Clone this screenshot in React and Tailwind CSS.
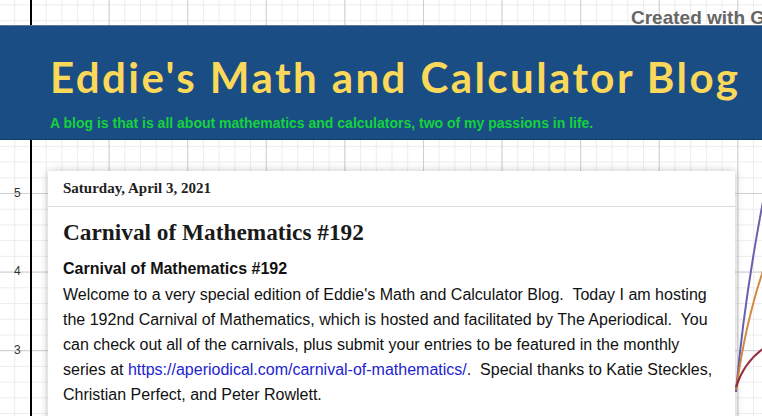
import React from "react";

export default function App() {
  return (
    <div className="relative w-[762px] h-[416px] overflow-hidden bg-white [background-image:linear-gradient(to_right,#cfcfcf_1px,transparent_1px),linear-gradient(to_bottom,#cfcfcf_1px,transparent_1px),linear-gradient(to_right,#ececec_1px,transparent_1px),linear-gradient(to_bottom,#ececec_1px,transparent_1px)] [background-size:78.6px_78.6px,78.6px_78.6px,15.72px_15.72px,15.72px_15.72px] [background-position:30px_35.8px,30px_35.8px,14.28px_4.36px,14.28px_4.36px]">
      {/* graph canvas items */}
      <div className="absolute left-[30px] top-0 bottom-0 w-[1.5px] bg-black" />
      <div className="absolute left-[14px] top-[185px] text-[12px] leading-[16px] text-[#333] [font-family:'Liberation_Sans',Arial,sans-serif]">5</div>
      <div className="absolute left-[14px] top-[263px] text-[12px] leading-[16px] text-[#333] [font-family:'Liberation_Sans',Arial,sans-serif]">4</div>
      <div className="absolute left-[14px] top-[342px] text-[12px] leading-[16px] text-[#333] [font-family:'Liberation_Sans',Arial,sans-serif]">3</div>
      <svg className="absolute left-[730px] top-[180px]" width="40" height="236" viewBox="730 180 40 236">
        <path d="M736 392 Q744 300 764 196" fill="none" stroke="#6a5fb0" strokeWidth="2" />
        <path d="M736 390 Q746 320 764 268" fill="none" stroke="#d28a3e" strokeWidth="2" />
        <path d="M736 387 Q744 362 764 348" fill="none" stroke="#9a2f45" strokeWidth="2" />
      </svg>

      <div className="relative z-10 flex flex-col">
        <div className="h-[25px] overflow-hidden whitespace-nowrap pl-[631px] pt-[6px] text-[19px] leading-[24px] font-bold text-[#666] [font-family:'Liberation_Sans',Arial,sans-serif]">
          Created with Graphing Calculator
        </div>
        <header className="h-[115px] bg-[#1b4d85] border-t border-[#5e7896] border-b border-b-[#15406e] flex flex-col pl-[50px]">
          <h1 className="mt-[27px] text-[42px] leading-[48px] font-bold tracking-[0.058em] text-[#fad85a] whitespace-nowrap [font-family:Lato,'Open_Sans',sans-serif]">
            Eddie's Math and Calculator Blog
          </h1>
          <p className="mt-[14px] text-[14px] leading-[16px] font-bold text-[#14d23c] whitespace-nowrap [font-family:'Liberation_Sans',Arial,sans-serif]">
            A blog is that is all about mathematics and calculators, two of my passions in life.
          </p>
        </header>
        <div className="pl-[48px] pt-[31px]">
          <article className="w-[687px] h-[300px] bg-white shadow-[0_0_8px_rgba(0,0,0,0.22)]">
            <div className="h-[36px] flex items-center px-[15px] border-b border-[#dcdcdc] text-[15px] font-bold text-[#222] [font-family:'Liberation_Serif','Times_New_Roman',serif]">
              Saturday, April 3, 2021
            </div>
            <div className="pl-[15px] pr-[14px] pt-[10px] text-[#111]">
              <h2 className="text-[23.3px] leading-[30px] font-bold text-[#1a1a1a] [font-family:'Liberation_Serif','Times_New_Roman',serif]">
                Carnival of Mathematics #192
              </h2>
              <div className="mt-[9px] text-[16px] leading-[25px] [font-family:'Liberation_Sans',Arial,sans-serif]">
                <p className="font-bold">Carnival of Mathematics #192</p>
                <p className="mt-[1px]">
                  Welcome to a very special edition of Eddie's Math and Calculator Blog.{"\u00a0 "}Today I am hosting the 192nd Carnival of Mathematics, which is hosted and facilitated by The Aperiodical.{"\u00a0 "}You can check out all of the carnivals, plus submit your entries to be featured in the monthly series at{" "}
                  <a className="text-[#2323d0]" href="#">https://aperiodical.com/carnival-of-mathematics/</a>.{"\u00a0 "}Special thanks to Katie Steckles, Christian Perfect, and Peter Rowlett.
                </p>
              </div>
            </div>
          </article>
        </div>
      </div>
    </div>
  );
}
